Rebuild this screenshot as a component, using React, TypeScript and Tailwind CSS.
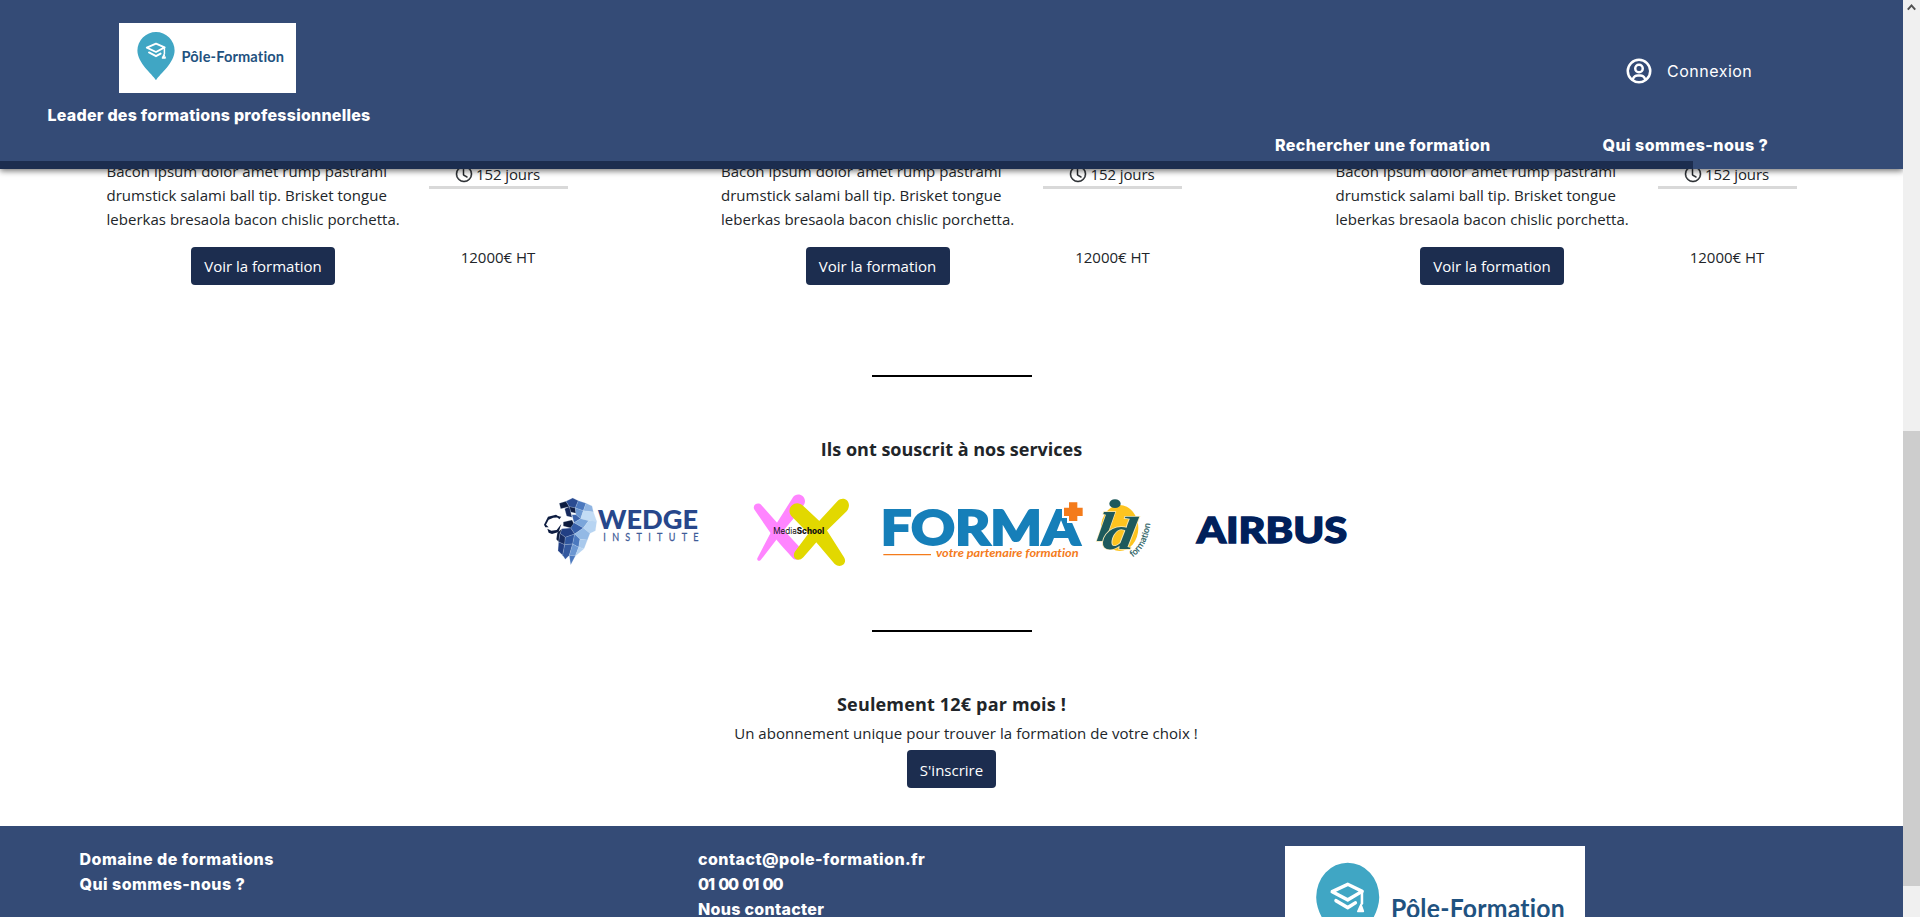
import { BiUserCircle } from "react-icons/bi";
import { BsClock } from "react-icons/bs";

function PoleLogo({ className }: { className: string }) {
  return (
    <svg viewBox="0 0 177 70" preserveAspectRatio="none" className={className} role="img" aria-label="Pôle-Formation">
      <rect width="177" height="70" fill="#fff" />
      <path d="M37 57.2C33 51 18.4 40 18.4 27.6A18.6 18.6 0 1 1 55.6 27.6C55.6 40 41 51 37 57.2Z" fill="#40a6c4" />
      <g fill="none" stroke="#fff" strokeWidth="1.9" strokeLinecap="round" strokeLinejoin="round">
        <path d="M27.8 24.6L37 20.6L45.6 24.4L37 29Z" />
        <path d="M30 29.4L37 33.2L41.6 30.6" />
        <path d="M45.4 24.6V31" strokeWidth="1.5" />
        <path d="M44.8 31.6L43 35.2H46.2Z" strokeWidth="1" fill="#fff" />
      </g>
      <text
        x="62.5"
        y="38.7"
        fontSize="14.6"
        fontWeight="700"
        textLength="102.5"
        lengthAdjust="spacing"
        fill="#1f5280"
        className="font-['Lato',sans-serif] [font-variant-ligatures:none]"
      >
        Pôle-Formation
      </text>
    </svg>
  );
}

function WedgeLogo() {
  return (
    <svg viewBox="30 30 510 240" className="h-20 w-[170px]">
      <g stroke="#c9d9ee" strokeWidth="0.6" strokeLinejoin="round">
        <path d="M88 70L108 64L118 80L92 86Z" fill="#0d1c40" />
        <path d="M108 64L128 54L145 62L136 84L118 80Z" fill="#2a4b91" />
        <path d="M145 62L168 70L160 92L136 84Z" fill="#4b78be" />
        <path d="M118 80L136 84L138 100L122 96Z" fill="#101f47" />
        <path d="M104 86L118 80L126 112L110 108Z" fill="#16295c" />
        <path d="M168 70L186 78L190 96L160 92Z" fill="#8fb4e2" />
        <path d="M136 84L160 92L152 116L138 104Z" fill="#6b97d2" />
        <path d="M160 92L190 96L200 124L176 122L152 116Z" fill="#c3dcf5" />
        <path d="M126 104L138 104L152 116L132 128Z" fill="#3a62ab" />
        <path d="M152 116L176 122L160 144L132 128Z" fill="#7ba5da" />
        <path d="M176 122L200 124L196 152L180 160L160 144Z" fill="#b7d4f2" />
        <path d="M100 126L126 120L132 132L122 144L100 138Z" fill="#0c1a3c" />
        <path d="M122 144L132 128L160 144L134 162Z" fill="#365ea8" />
        <path d="M160 144L180 160L172 180L150 178L134 162Z" fill="#93b9e5" />
        <path d="M96 146L122 144L134 162L106 172L90 160Z" fill="#223f84" />
        <path d="M96 146L90 160L86 186L79 178L82 158Z" fill="#0c1a3c" />
        <path d="M90 160L106 172L104 194L86 186Z" fill="#182c61" />
        <path d="M106 172L134 162L128 192L104 194Z" fill="#2f569f" />
        <path d="M134 162L150 178L146 202L128 192Z" fill="#4b78be" />
        <path d="M150 178L172 180L162 206L146 202Z" fill="#a9c9ec" />
        <path d="M86 186L104 194L98 226L84 212Z" fill="#223f84" />
        <path d="M104 194L128 192L118 226L106 238L98 226Z" fill="#34599f" />
        <path d="M128 192L146 202L136 228L118 226Z" fill="#6c97d2" />
        <path d="M146 202L162 206L148 218L136 228Z" fill="#b7d4f2" />
        <path d="M118 226L136 228L122 254Z" fill="#4b78be" />
      </g>
      <g fill="#0d1c40">
        <path d="M42 134L54 110L78 104L90 112L70 113L56 119L48 134L56 142L46 142Z" />
        <path d="M52 146L64 152L80 150L94 132L86 156L66 162L56 158Z" />
        <path d="M78 108L94 110L88 118Z" />
      </g>
      <text x="203" y="147" fontSize="78" fontWeight="900" textLength="301" lengthAdjust="spacingAndGlyphs" fill="#27478b" className="font-['Lato',sans-serif]">
        WEDGE
      </text>
      <text
        x="275"
        y="182"
        fontSize="34"
        textLength="357"
        lengthAdjust="spacing"
        fill="#3f5b98"
        stroke="#3f5b98"
        strokeWidth="0.8"
        transform="scale(0.8 1)"
        className="font-['Lato',sans-serif]"
      >
        INSTITUTE
      </text>
    </svg>
  );
}

function MediaSchoolLogo() {
  return (
    <svg viewBox="645 30 330 240" className="ml-[35px] h-20 w-[110px]">
      <g fill="#ff85ff">
        <path d="M682 235L722 158L789 52C800 34 831 46 824 70C818 84 790 116 754 160L694 238C688 246 680 242 682 235Z" />
        <path d="M674 90C664 76 684 64 694 75L752 140L812 205C828 224 808 246 790 236C776 222 740 180 722 160Z" />
      </g>
      <g fill="#e2d800">
        <path d="M784 108C766 84 796 56 820 78L880 134L942 232C954 252 930 266 914 252L846 172Z" />
        <path d="M922 64C942 44 970 68 950 94L884 158L820 232C806 248 784 236 794 216L846 146Z" />
      </g>
      <text x="730" y="161" fontSize="25" textLength="153" lengthAdjust="spacingAndGlyphs" fill="#111" className="font-['Inter',sans-serif]">
        Media<tspan fontWeight="800">School</tspan>
      </text>
    </svg>
  );
}

function FormaLogo() {
  return (
    <svg viewBox="45 30 630 240" className="ml-5 h-20 w-[210px]">
      <text
        x="62"
        y="195"
        fontSize="144"
        fontWeight="900"
        textLength="598"
        lengthAdjust="spacingAndGlyphs"
        fill="#167fb9"
        stroke="#167fb9"
        strokeWidth="6"
        className="font-['Lato',sans-serif]"
      >
        FORMA
      </text>
      <path d="M627 67H652V83H668V108H652V123H627V108H612V83H627Z" fill="#f47b1b" stroke="#fff" strokeWidth="12" paintOrder="stroke" />
      <path d="M70 224H213" stroke="#f47b1b" strokeWidth="4" />
      <text
        x="228"
        y="232"
        fontSize="34"
        fontWeight="700"
        fontStyle="italic"
        textLength="428"
        lengthAdjust="spacingAndGlyphs"
        fill="#f47b1b"
        className="font-['Lato',sans-serif] [font-variant-ligatures:none]"
      >
        votre partenaire formation
      </text>
    </svg>
  );
}

function IdLogo() {
  return (
    <svg viewBox="690 30 210 240" className="ml-[5px] h-20 w-[70px]">
      <defs>
        <path id="id-arc" d="M818 232Q866 196 871 122" />
      </defs>
      <ellipse cx="779" cy="144" rx="56" ry="69" fill="#fdc41f" />
      <g fontWeight="700" fontStyle="italic" fill="#1e5a5c" stroke="#f7e9b8" strokeWidth="4" paintOrder="stroke" className="font-['Liberation_Serif',serif]">
        <text fontSize="190" transform="translate(706 184) skewX(-10)">
          ı
        </text>
        <text fontSize="140" textLength="98" lengthAdjust="spacingAndGlyphs" transform="translate(724 206) skewX(-8)">
          d
        </text>
      </g>
      <ellipse cx="765" cy="71" rx="17" ry="13" fill="#1e5a5c" />
      <text fontSize="25" fill="#1e5a5c" stroke="#1e5a5c" strokeWidth="0.8" className="font-['Open_Sans',sans-serif]">
        <textPath href="#id-arc" textLength="118" lengthAdjust="spacing">
          formation
        </textPath>
      </text>
    </svg>
  );
}

function AirbusLogo() {
  return (
    <svg viewBox="990 30 495 240" className="ml-[30px] h-20 w-[165px]">
      <text
        x="1010"
        y="189"
        fontSize="108"
        fontWeight="900"
        textLength="452"
        lengthAdjust="spacingAndGlyphs"
        fill="#00205b"
        stroke="#00205b"
        strokeWidth="4"
        className="font-['Lato',sans-serif]"
      >
        AIRBUS
      </text>
    </svg>
  );
}

function Header() {
  return (
    <header className="relative z-10 flex h-[169px] shrink-0 flex-col bg-[#344b76] font-['Inter',sans-serif] text-white shadow-[0_2px_6px_rgba(0,0,0,0.55)]">
      <div className="flex h-[161px] justify-between">
        <div className="flex w-[415px] flex-col items-center pt-[23px]">
          <PoleLogo className="h-[70px] w-[177px]" />
          <p className="mt-2.5 pl-[3px] text-base font-extrabold tracking-[0.23px] whitespace-nowrap">Leader des formations professionnelles</p>
        </div>
        <div className="flex w-[628px] flex-col">
          <div className="mt-14 flex h-[30px] items-center pl-[349px]">
            <BiUserCircle className="size-[30px]" />
            <span className="ml-[13px] text-base tracking-[0.5px]">Connexion</span>
          </div>
          <nav className="mt-[47px] flex text-base font-extrabold whitespace-nowrap">
            <span className="w-[327.5px] tracking-[0.38px]">Rechercher une formation</span>
            <span className="tracking-[0.46px]">Qui sommes-nous ?</span>
          </nav>
        </div>
      </div>
      <div className="h-2 w-[1693px] bg-[#1c2d4f]" />
    </header>
  );
}

function CourseCard() {
  return (
    <article className="flex w-[614.5px] shrink-0">
      <div className="flex w-[313px] flex-col items-center">
        <p className="w-full tracking-[0.02px] whitespace-nowrap">
          Bacon ipsum dolor amet rump pastrami
          <br />
          drumstick salami ball tip. Brisket tongue
          <br />
          leberkas bresaola bacon chislic porchetta.
        </p>
        <button className="mt-4 h-[38px] w-36 rounded bg-[#1c2d4f] text-white">Voir la formation</button>
      </div>
      <div className="ml-[9px] w-[139px] pt-[3px] text-center">
        <div className="flex h-[27px] items-center justify-center gap-1 border-b-[3px] border-[#d9d9d9]">
          <BsClock className="size-4 overflow-visible stroke-current stroke-[0.5]" />
          <span className="tracking-[-0.1px]">152 jours</span>
        </div>
        <p className="mt-14">12000€ HT</p>
      </div>
    </article>
  );
}

function Separator() {
  return <hr className="h-0.5 w-40 border-0 bg-black" />;
}

function Footer() {
  return (
    <footer className="mt-[38px] flex h-[180px] shrink-0 bg-[#344b76] pl-[79.5px] font-['Inter',sans-serif] text-base leading-[25px] font-extrabold text-white">
      <div className="w-[618.5px] shrink-0 pt-[21px]">
        <p className="tracking-[0.5px]">Domaine de formations</p>
        <p className="tracking-[0.46px]">Qui sommes-nous ?</p>
      </div>
      <div className="w-[587px] shrink-0 pt-[21px]">
        <p className="tracking-[0.45px]">contact@pole-formation.fr</p>
        <p className="tracking-[-1.15px] [word-spacing:2px]">01 00 01 00</p>
        <p className="tracking-[0.3px]">Nous contacter</p>
      </div>
      <div className="pt-5">
        <PoleLogo className="h-[130px] w-[300px]" />
      </div>
    </footer>
  );
}

function Scrollbar() {
  return (
    <div className="flex h-full w-[17px] shrink-0 flex-col bg-[#f0f0f0]">
      <svg viewBox="0 0 17 17" className="size-[17px]">
        <path d="M4.8 9.6L8.5 5.4L12.2 9.6" fill="none" stroke="#505050" strokeWidth="2" />
      </svg>
      <div className="mt-[414px] h-[455px] bg-[#cdcdcd]" />
    </div>
  );
}

export default function App() {
  return (
    <div className="flex h-[917px] w-full overflow-hidden bg-white">
      <div className="flex h-full w-[1903px] shrink-0 flex-col overflow-hidden">
        <Header />
        <main className="-mt-2.5 flex shrink-0 flex-col items-center font-['Open_Sans',sans-serif] text-[15px] leading-6 text-[#212529]">
          <section className="flex w-full overflow-hidden pl-[106.5px]">
            <CourseCard />
            <CourseCard />
            <CourseCard />
          </section>
          <div className="h-[90px]" />
          <Separator />
          <h2 className="mt-[60px] text-lg leading-6 font-bold">Ils ont souscrit à nos services</h2>
          <section className="mt-[29px] flex w-full pl-[540px]">
            <WedgeLogo />
            <MediaSchoolLogo />
            <FormaLogo />
            <IdLogo />
            <AirbusLogo />
          </section>
          <div className="h-[60px]" />
          <Separator />
          <h2 className="mt-[60px] text-lg leading-6 font-bold tracking-[0.17px]">Seulement 12€ par mois !</h2>
          <p className="mt-[5px] pl-[29px] tracking-[0.05px]">Un abonnement unique pour trouver la formation de votre choix !</p>
          <button className="mt-[5px] h-[38px] w-[89px] rounded bg-[#1c2d4f] pt-0.5 text-white">S'inscrire</button>
        </main>
        <Footer />
      </div>
      <Scrollbar />
    </div>
  );
}
